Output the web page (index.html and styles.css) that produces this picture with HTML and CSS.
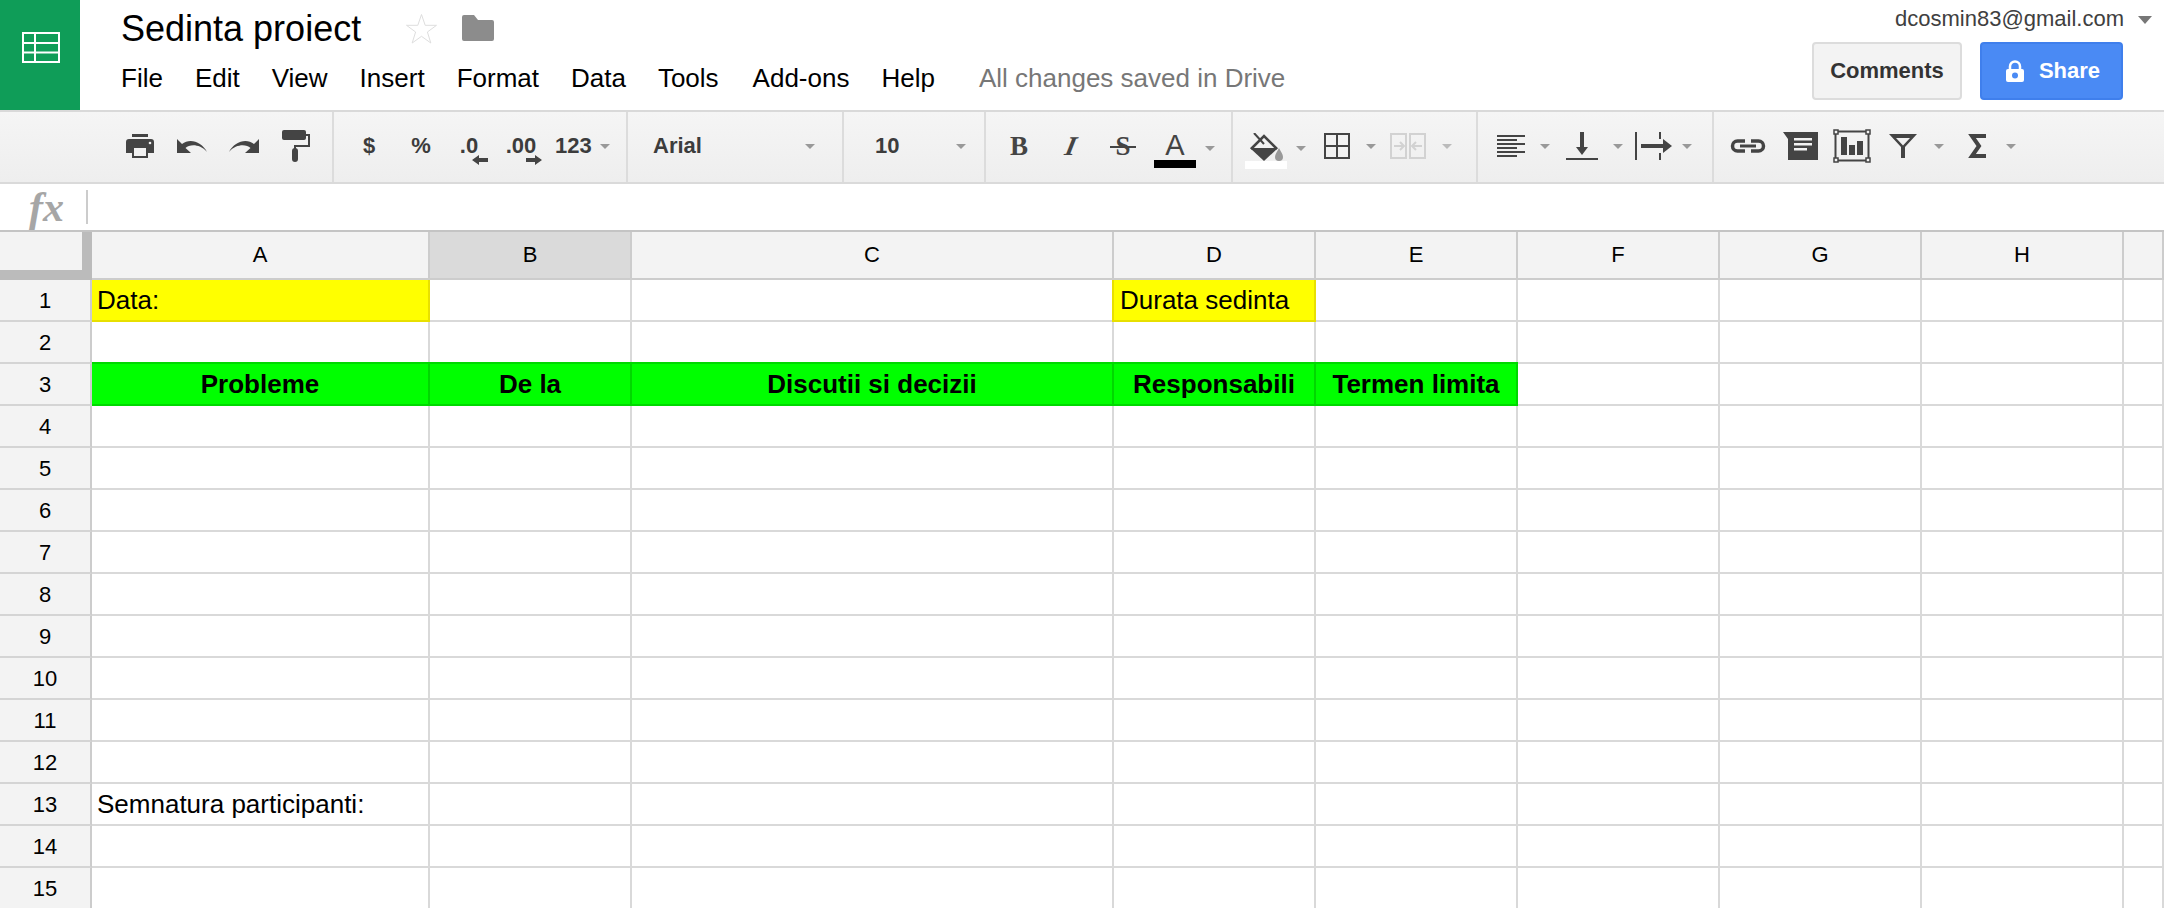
FILE: index.html
```html
<!DOCTYPE html>
<html lang="en">
<head>
<meta charset="utf-8">
<title>Sedinta proiect</title>
<link rel="stylesheet" href="styles.css">
</head>
<body>
<header class="header">
  <div class="logo">
    <svg width="38" height="31" viewBox="0 0 38 31" fill="none" stroke="#fff" stroke-width="2"><rect x="1" y="1" width="36" height="29"/><path d="M1 11H37M1 20.500H37M13 1V30"/></svg>
  </div>
  <div class="doc">
    <div class="title-row">
      <span class="title">Sedinta proiect</span>
      <svg class="star" width="33" height="32" viewBox="0 0 33 32" fill="#fff" stroke="#dedede" stroke-width="1"><path d="M16.500 1.500L20.200 12.300H31.500L22.400 19L25.800 30L16.500 23.300L7.200 30L10.600 19L1.500 12.300H12.800Z"/></svg>
      <svg class="folder" width="32" height="26" viewBox="0 0 32 26" fill="#8c8c8c"><path d="M2 0H12L16 5H30A2 2 0 0 1 32 7V24A2 2 0 0 1 30 26H2A2 2 0 0 1 0 24V2A2 2 0 0 1 2 0Z"/></svg>
    </div>
    <nav class="menu">
      <span>File</span><span>Edit</span><span>View</span><span>Insert</span><span>Format</span><span>Data</span><span>Tools</span><span class="addons">Add-ons</span><span>Help</span>
      <span class="saved">All changes saved in Drive</span>
    </nav>
  </div>
  <div class="account">
    <div class="email-row"><span class="email">dcosmin83@gmail.com</span><i class="email-caret"></i></div>
    <div class="buttons">
      <div class="btn comments">Comments</div>
      <div class="btn share">
        <svg width="18" height="22" viewBox="0 0 18 22"><path d="M4 10V6.500A5 5 0 0 1 14 6.500V10" fill="none" stroke="#fff" stroke-width="2.500"/><rect y="9" width="18" height="13" rx="2" fill="#fff"/><circle cx="9" cy="15.500" r="3" fill="#4a8af4"/></svg>
        <span>Share</span>
      </div>
    </div>
  </div>
</header>

<div class="toolbar">
  <div class="group g1">
    <div class="tool"><svg width="28" height="24" viewBox="0 0 28 24" fill="#444"><rect x="6" width="16" height="3"/><path d="M3 5H25A3 3 0 0 1 28 8V19H22V24H6V19H0V8A3 3 0 0 1 3 5Z"/><rect x="8" y="14" width="12" height="8" fill="#f2f2f2"/><circle cx="24" cy="9" r="1.300" fill="#f2f2f2"/></svg></div>
    <div class="tool"><svg width="30" height="14" viewBox="0 0 30 14" fill="#444"><path d="M0 0V14H14L8.500 9C13 5 23 5 30 13C25 3 13 -1.500 5 5Z"/></svg></div>
    <div class="tool"><svg width="30" height="14" viewBox="0 0 30 14" fill="#444"><path d="M30 0V14H16L21.500 9C17 5 7 5 0 13C5 3 17 -1.500 25 5Z"/></svg></div>
    <div class="tool"><svg width="28" height="32" viewBox="0 0 28 32"><rect width="24" height="10" rx="2" fill="#444"/><path d="M24 5H27V16H13V19" fill="none" stroke="#444" stroke-width="2"/><rect x="10" y="18" width="6" height="14" rx="3" fill="#444"/></svg></div>
  </div>
  <div class="group g2">
    <div class="tool txt">$</div>
    <div class="tool txt">%</div>
    <div class="tool txt dec">.0<svg class="arrow arrow-l" width="16" height="10" viewBox="0 0 16 10" fill="#444"><path d="M0 5L7 0V3H16V7H7V10Z"/></svg></div>
    <div class="tool txt dec">.00<svg class="arrow arrow-r" width="16" height="10" viewBox="0 0 16 10" fill="#444"><path d="M16 5L9 0V3H0V7H9V10Z"/></svg></div>
    <div class="txt numfmt">123<i class="caret"></i></div>
  </div>
  <div class="group select g3"><span class="txt">Arial</span><i class="caret"></i></div>
  <div class="group select g4"><span class="txt">10</span><i class="caret"></i></div>
  <div class="group g5">
    <div class="tool glyph bold-b">B</div>
    <div class="tool glyph ital-i">I</div>
    <div class="tool glyph strike"><span class="strike-s">S</span></div>
    <div class="tool color"><span class="glyph-a">A</span><b class="swatch black"></b></div>
    <i class="caret low"></i>
  </div>
  <div class="group g6">
    <div class="tool color"><svg width="42" height="36" viewBox="0 0 42 36"><path d="M9 0L19 11" stroke="#444" stroke-width="2" fill="none"/><path d="M6 16L19 3L32 16" stroke="#444" stroke-width="2.500" fill="none"/><path d="M5 15H33L19 28Z" fill="#444"/><path d="M34 15C36 19 38 21 38 24A4 4 0 0 1 30 24C30 21 32 19 34 15Z" fill="#999"/><rect y="28" width="42" height="8" fill="#fff"/></svg></div>
    <i class="caret low"></i>
    <div class="tool"><svg width="26" height="26" viewBox="0 0 26 26" fill="none" stroke="#444" stroke-width="2"><rect x="1" y="1" width="24" height="24"/><path d="M13 1V25M1 13H25"/></svg></div>
    <i class="caret"></i>
    <div class="tool"><svg width="36" height="26" viewBox="0 0 36 26" fill="none" stroke="#d2d2d2" stroke-width="2"><rect x="1" y="1" width="15" height="24"/><rect x="20" y="1" width="15" height="24"/><path d="M4 13H13M10 9L14 13L10 17M32 13H23M26 9L22 13L26 17"/></svg></div>
    <i class="caret pale"></i>
  </div>
  <div class="group g7">
    <div class="tool"><svg width="28" height="22" viewBox="0 0 28 22" fill="#444"><rect width="28" height="2"/><rect y="4" width="20" height="2"/><rect y="8" width="28" height="2"/><rect y="12" width="20" height="2"/><rect y="16" width="28" height="2"/><rect y="20" width="20" height="2"/></svg></div>
    <i class="caret"></i>
    <div class="tool"><svg width="32" height="28" viewBox="0 0 32 28" fill="#444"><rect x="14" width="4" height="16"/><path d="M10 15H22L16 23Z"/><rect y="26" width="32" height="2"/></svg></div>
    <i class="caret wide"></i>
    <div class="tool"><svg width="37" height="28" viewBox="0 0 37 28" fill="#444"><rect width="2" height="28"/><rect x="24" width="2" height="7"/><rect x="24" y="21" width="2" height="7"/><rect x="6" y="12" width="24" height="4"/><path d="M28 7L37 14L28 21Z"/></svg></div>
    <i class="caret"></i>
  </div>
  <div class="group g8">
    <div class="tool"><svg width="36" height="14" viewBox="0 0 36 14" fill="none" stroke="#444"><path d="M15 2H7.500A5 5 0 0 0 7.500 12H15M21 2H28.500A5 5 0 0 1 28.500 12H21" stroke-width="3.500"/><path d="M10 7H26" stroke-width="3"/></svg></div>
    <div class="tool"><svg width="35" height="28" viewBox="0 0 35 28"><path d="M0 0H35V28H5V7Z" fill="#444"/><path d="M11 6H29V8.500H11ZM11 11H29V13.500H11ZM11 16H24V18.500H11Z" fill="#f2f2f2"/></svg></div>
    <div class="tool"><svg width="38" height="34" viewBox="0 0 38 34"><rect x="2.500" y="2.500" width="33" height="29" fill="none" stroke="#444" stroke-width="2"/><path d="M8 8H14V26H8ZM16 16H22V26H16ZM24 12H30V26H24Z" fill="#444"/><g fill="#f2f2f2" stroke="#444" stroke-width="1.500"><rect x="1" y="1" width="4" height="4"/><rect x="33" y="1" width="4" height="4"/><rect x="1" y="29" width="4" height="4"/><rect x="33" y="29" width="4" height="4"/></g></svg></div>
    <div class="tool filter"><svg width="28" height="24" viewBox="0 0 28 24" fill="#444" fill-rule="evenodd"><path d="M0 0H28L16 13V24H12V13ZM7 4L14 11.500L21 4Z"/></svg></div>
    <i class="caret wide"></i>
    <div class="tool sigma"><svg width="18" height="24" viewBox="0 0 18 24" fill="none" stroke="#444" stroke-width="4"><path d="M18 2H4L11 12L4 22H18"/></svg></div>
    <i class="caret"></i>
  </div>
</div>

<div class="formula"><span class="fx">fx</span><span class="fx-sep"></span></div>

<main class="sheet">
  <div class="corner"></div><div class="ch">A</div><div class="ch sel">B</div><div class="ch">C</div><div class="ch">D</div><div class="ch">E</div><div class="ch">F</div><div class="ch">G</div><div class="ch">H</div><div class="ch"></div>

  <div class="rh">1</div><div class="c yellow">Data:</div><div class="c"></div><div class="c"></div><div class="c yellow left-edge">Durata sedinta</div><div class="c"></div><div class="c"></div><div class="c"></div><div class="c"></div><div class="c"></div>
  <div class="rh">2</div><div class="c"></div><div class="c"></div><div class="c"></div><div class="c"></div><div class="c"></div><div class="c"></div><div class="c"></div><div class="c"></div><div class="c"></div>
  <div class="rh">3</div><div class="c green">Probleme</div><div class="c green">De la</div><div class="c green">Discutii si decizii</div><div class="c green">Responsabili</div><div class="c green">Termen limita</div><div class="c"></div><div class="c"></div><div class="c"></div><div class="c"></div>
  <div class="rh">4</div><div class="c"></div><div class="c"></div><div class="c"></div><div class="c"></div><div class="c"></div><div class="c"></div><div class="c"></div><div class="c"></div><div class="c"></div>
  <div class="rh">5</div><div class="c"></div><div class="c"></div><div class="c"></div><div class="c"></div><div class="c"></div><div class="c"></div><div class="c"></div><div class="c"></div><div class="c"></div>
  <div class="rh">6</div><div class="c"></div><div class="c"></div><div class="c"></div><div class="c"></div><div class="c"></div><div class="c"></div><div class="c"></div><div class="c"></div><div class="c"></div>
  <div class="rh">7</div><div class="c"></div><div class="c"></div><div class="c"></div><div class="c"></div><div class="c"></div><div class="c"></div><div class="c"></div><div class="c"></div><div class="c"></div>
  <div class="rh">8</div><div class="c"></div><div class="c"></div><div class="c"></div><div class="c"></div><div class="c"></div><div class="c"></div><div class="c"></div><div class="c"></div><div class="c"></div>
  <div class="rh">9</div><div class="c"></div><div class="c"></div><div class="c"></div><div class="c"></div><div class="c"></div><div class="c"></div><div class="c"></div><div class="c"></div><div class="c"></div>
  <div class="rh">10</div><div class="c"></div><div class="c"></div><div class="c"></div><div class="c"></div><div class="c"></div><div class="c"></div><div class="c"></div><div class="c"></div><div class="c"></div>
  <div class="rh">11</div><div class="c"></div><div class="c"></div><div class="c"></div><div class="c"></div><div class="c"></div><div class="c"></div><div class="c"></div><div class="c"></div><div class="c"></div>
  <div class="rh">12</div><div class="c"></div><div class="c"></div><div class="c"></div><div class="c"></div><div class="c"></div><div class="c"></div><div class="c"></div><div class="c"></div><div class="c"></div>
  <div class="rh">13</div><div class="c">Semnatura participanti:</div><div class="c"></div><div class="c"></div><div class="c"></div><div class="c"></div><div class="c"></div><div class="c"></div><div class="c"></div><div class="c"></div>
  <div class="rh">14</div><div class="c"></div><div class="c"></div><div class="c"></div><div class="c"></div><div class="c"></div><div class="c"></div><div class="c"></div><div class="c"></div><div class="c"></div>
  <div class="rh">15</div><div class="c"></div><div class="c"></div><div class="c"></div><div class="c"></div><div class="c"></div><div class="c"></div><div class="c"></div><div class="c"></div><div class="c"></div>
</main>
</body>
</html>
```
FILE: styles.css
```css
* { box-sizing: border-box; }
html, body { margin: 0; height: 908px; overflow: hidden; }
body { font-family: "Liberation Sans", Arial, sans-serif; background: #fff; color: #000; }

/* header */
.header { display: flex; height: 112px; border-bottom: 2px solid #d9d9d9; }
.logo { width: 80px; flex: none; background: #0f9d58; padding: 32px 0 0 22px; }
.doc { flex: 1; padding-left: 41px; }
.title-row { display: flex; align-items: center; height: 57px; }
.title { font-size: 36px; }
.star { margin-left: 44px; }
.folder { margin-left: 24px; margin-top: -1px; }
.menu { display: flex; align-items: center; gap: 32px; height: 42px; font-size: 26px; }
.addons { margin-left: 2px; }
.saved { margin-left: 12px; color: #777; }

.account { flex: none; display: flex; flex-direction: column; align-items: flex-end; }
.email-row { display: flex; align-items: center; height: 37px; padding-right: 12px; font-size: 22px; color: #404040; }
.email-caret { margin-left: 14px; margin-top: 3px; border-style: solid; border-width: 8px 7.500px 0; border-color: #777 transparent transparent; }
.buttons { display: flex; gap: 18px; margin-top: 5px; margin-right: 41px; }
.btn { display: flex; align-items: center; justify-content: center; height: 58px; border-radius: 4px; border: 2px solid; font-size: 22px; font-weight: 700; }
.comments { width: 150px; background: #f3f3f3; border-color: #dcdcdc; color: #333; }
.share { width: 143px; gap: 15px; padding-left: 3px; background: #4a8af4; border-color: #3f7fec; color: #fff; }

/* toolbar */
.toolbar { display: flex; height: 72px; border-bottom: 2px solid #dadada; background: linear-gradient(#f5f5f5, #eeeeee); color: #3c3c3c; }
.group { display: flex; flex: none; padding-top: 2px; padding-bottom: 4px; border-right: 2px solid #dcdcdc; }
.g1 { width: 334px; padding-left: 114px; }
.g2 { width: 294px; padding-left: 9px; }
.g3 { width: 216px; padding-left: 25px; padding-right: 27px; }
.g4 { width: 142px; padding-left: 31px; padding-right: 18px; }
.g5 { width: 247px; padding-left: 7px; }
.g6 { width: 245px; padding-left: 7px; }
.g7 { width: 236px; padding-left: 7px; }
.g8 { flex: 1; border-right: 0; padding-left: 8px; }
.select { align-items: center; justify-content: space-between; }
.tool { position: relative; flex: none; width: 52px; display: flex; align-items: center; justify-content: center; }
.txt { font-size: 22px; font-weight: 700; }
.dec { padding-right: 8px; }
.numfmt { display: flex; align-items: center; padding-left: 4px; gap: 8px; }
.arrow { position: absolute; top: 41px; }
.arrow-l { left: 25px; }
.arrow-r { left: 27px; }
.caret { flex: none; align-self: center; width: 0; height: 0; margin: 0 6px 0 3px; border-style: solid; border-width: 5px 5.500px 0; border-color: #999 transparent transparent; }
.select .caret { margin: 0; }
.numfmt .caret { margin: 0; }
.low { margin-top: 5px; margin-left: 4px; margin-right: 5px; }
.wide { margin-left: 5px; margin-right: 4px; }
.pale { margin-left: 8px; border-top-color: #bbb; }
.filter { margin-left: -1px; }
.sigma { margin-left: 3px; }

.glyph { font-family: "Liberation Serif", serif; font-size: 27px; font-weight: 700; color: #444; }
.ital-i { font-style: italic; transform: skewX(-12deg); }
.strike-s { position: relative; display: inline-block; }
.strike-s::after { content: ""; position: absolute; left: -5px; right: -5px; top: 15px; height: 2px; background: #444; }
.color { flex-direction: column; padding-top: 9px; }
.glyph-a { font-size: 29px; line-height: 24px; color: #444; }
.swatch { display: block; width: 42px; height: 8px; margin-top: 3px; }
.black { background: #000; }

/* formula bar */
.formula { display: flex; align-items: center; height: 48px; border-bottom: 2px solid #c4c4c4; padding-left: 29px; }
.fx { width: 57px; font-family: "Liberation Serif", serif; font-style: italic; font-weight: 700; font-size: 42px; line-height: 34px; color: #a6a6a6; }
.fx-sep { width: 2px; height: 34px; background: #ccc; }

/* sheet */
.sheet { display: grid; grid-template-columns: 92px 338px 202px 482px 202px 202px 202px 202px 202px 1fr; grid-template-rows: 48px repeat(15, 42px); }
.corner { background: #f3f3f3; border-right: 10px solid #bbb; border-bottom: 10px solid #bbb; }
.ch, .rh { display: flex; align-items: center; justify-content: center; background: #f3f3f3; font-size: 22px; }
.ch { border-right: 2px solid #ccc; border-bottom: 2px solid #ccc; }
.rh { padding-top: 1px; border-right: 2px solid #ccc; border-bottom: 2px solid #d4d4d4; }
.sel { background: #dadada; }
.c { display: flex; align-items: center; padding: 1px 5px 0; font-size: 26px; white-space: nowrap; border-right: 2px solid #d9d9d9; border-bottom: 2px solid #d9d9d9; }
.yellow { background: #ffff00; border-color: #e8e000; }
.left-edge { padding-left: 6px; box-shadow: -2px 0 0 #e8e000; }
.green { justify-content: center; background: #00ff00; font-weight: 700; border-color: #00d800; box-shadow: 0 -2px 0 #00d800; }
```
